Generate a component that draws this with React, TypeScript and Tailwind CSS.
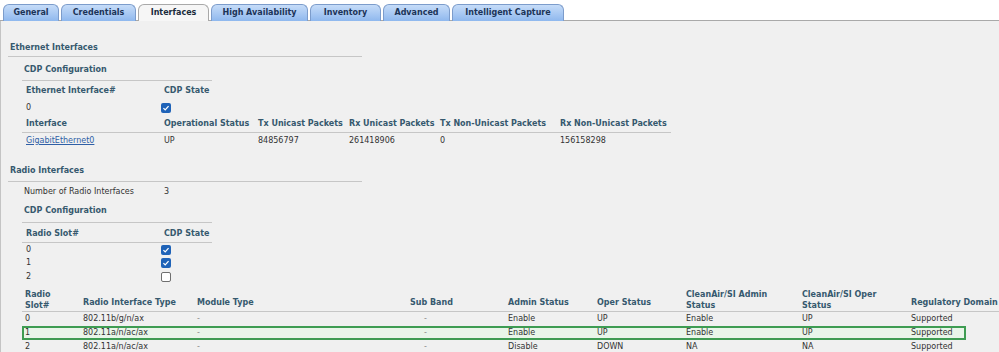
import React from 'react';

const tabs = [
  { label: 'General', w: 'w-[56px]' },
  { label: 'Credentials', w: 'w-[75px]' },
  { label: 'Interfaces', w: 'w-[71px]', active: true },
  { label: 'High Availability', w: 'w-[97px]' },
  { label: 'Inventory', w: 'w-[71px]' },
  { label: 'Advanced', w: 'w-[67px]' },
  { label: 'Intelligent Capture', w: 'w-[112px]' },
];

const head = 'font-bold text-[#36596e]';

const Checkbox: React.FC<{ checked?: boolean }> = ({ checked }) =>
  checked ? (
    <span className="flex h-[10px] w-[10px] items-center justify-center rounded-[2px] bg-[#1f63b8]">
      <svg viewBox="0 0 10 10" className="h-[8px] w-[8px]">
        <polyline points="1.8,5.2 4,7.3 8.2,2.6" fill="none" stroke="#fff" strokeWidth="1.6" />
      </svg>
    </span>
  ) : (
    <span className="block h-[10px] w-[10px] rounded-[2px] border border-[#6f6f6f] bg-white" />
  );

const ethCols = ['w-[139px] pl-[4px]', 'w-[94px] pl-[3px]', 'w-[91px] pl-[3px]', 'w-[91px] pl-[3px]', 'w-[120px] pl-[3px]', 'w-[114px] pl-[3px]'];
const radioCols = ['w-[58px] pl-[3px]', 'w-[114px] pl-[3px]', 'w-[213px] pl-[3px]', 'w-[98px] pl-[3px]', 'w-[89px] pl-[3px]', 'w-[89px] pl-[3px]', 'w-[116px] pl-[3px]', 'w-[109px] pl-[3px]', 'flex-1 pl-[3px]'];

const radioRows = [
  ['0', '802.11b/g/n/ax', '-', '-', 'Enable', 'UP', 'Enable', 'UP', 'Supported'],
  ['1', '802.11a/n/ac/ax', '-', '-', 'Enable', 'UP', 'Enable', 'UP', 'Supported'],
  ['2', '802.11a/n/ac/ax', '-', '-', 'Disable', 'DOWN', 'NA', 'NA', 'Supported'],
];

export default function App() {
  return (
    <div className="h-[352px] w-[999px] overflow-hidden bg-white font-['DejaVu_Sans',Verdana,sans-serif] text-[8px] leading-[10px] text-[#333]">
      {/* Tabs */}
      <div className="flex h-[21px] items-end gap-[2px] border-b border-[#a9a9a9] pl-[3px] pt-[4px]">
        {tabs.map((t) => (
          <div
            key={t.label}
            className={`${t.w} -mb-px flex h-[17px] items-center justify-center rounded-t-[6px] border border-b-0 font-bold ${
              t.active
                ? 'border-[#a9a9a9] bg-[#f6f6f6] text-[#1b2b3c]'
                : 'border-[#7c9ccb] bg-gradient-to-b from-[#c6dcf8] to-[#8fb8ee] text-[#1c3458]'
            }`}
          >
            {t.label}
          </div>
        ))}
      </div>

      {/* Content */}
      <div className="h-[331px] border-l border-[#c4c4c4] bg-[#f0f0f0] pl-[7px] pt-[19px]">
        <div className={`flex h-[17px] w-[354px] items-center border-b border-[#c6c6c6] pl-[2px] ${head}`}>Ethernet Interfaces</div>

        <div className="ml-[14px]">
          <div className={`flex h-[24px] w-[190px] items-center border-b border-[#c6c6c6] pl-[2px] pt-[3px] ${head}`}>CDP Configuration</div>
          <div className={`flex h-[20px] items-center ${head}`}>
            <div className={ethCols[0]}>Ethernet Interface#</div>
            <div className={ethCols[1]}>CDP State</div>
          </div>
          <div className="flex h-[13px] items-center">
            <div className={ethCols[0]}>0</div>
            <div className="w-[94px]">
              <Checkbox checked />
            </div>
          </div>
          <div className={`flex h-[19px] w-[649px] items-end border-b border-[#c6c6c6] pb-[3px] ${head}`}>
            <div className={ethCols[0]}>Interface</div>
            <div className={ethCols[1]}>Operational Status</div>
            <div className={ethCols[2]}>Tx Unicast Packets</div>
            <div className={ethCols[3]}>Rx Unicast Packets</div>
            <div className={ethCols[4]}>Tx Non-Unicast Packets</div>
            <div className={ethCols[5]}>Rx Non-Unicast Packets</div>
          </div>
          <div className="flex h-[15px] items-center">
            <div className={ethCols[0]}>
              <a href="#" className="text-[#2f5fa6] underline">GigabitEthernet0</a>
            </div>
            <div className={ethCols[1]}>UP</div>
            <div className={ethCols[2]}>84856797</div>
            <div className={ethCols[3]}>261418906</div>
            <div className={ethCols[4]}>0</div>
            <div className={ethCols[5]}>156158298</div>
          </div>
        </div>

        <div className={`flex h-[34px] w-[354px] items-end border-b border-[#c6c6c6] pb-[5px] pl-[2px] ${head}`}>Radio Interfaces</div>

        <div className="ml-[14px]">
          <div className="flex h-[19px] items-center">
            <div className="w-[139px] whitespace-nowrap pl-[2px]">Number of Radio Interfaces</div>
            <div className="pl-[3px]">3</div>
          </div>
          <div className={`flex h-[22px] w-[190px] items-end border-b border-[#c6c6c6] pb-[6px] pl-[2px] ${head}`}>CDP Configuration</div>
          <div className={`flex h-[20px] w-[190px] items-end border-b border-[#c6c6c6] pb-[3px] ${head}`}>
            <div className={ethCols[0]}>Radio Slot#</div>
            <div className="w-[51px] pl-[3px]">CDP State</div>
          </div>
          {[true, true, false].map((c, i) => (
            <div key={i} className={`flex items-center ${i === 1 ? 'h-[14px]' : 'h-[13px]'}`}>
              <div className={ethCols[0]}>{i}</div>
              <Checkbox checked={c} />
            </div>
          ))}

          <div className={`flex h-[29px] w-[977px] items-end border-b border-[#c6c6c6] ${head}`}>
            <div className={`${radioCols[0]} leading-[11px]`}>
              Radio
              <br />
              Slot#
            </div>
            <div className={`${radioCols[1]} pb-[3px]`}>Radio Interface Type</div>
            <div className={`${radioCols[2]} pb-[3px]`}>Module Type</div>
            <div className={`${radioCols[3]} pb-[3px]`}>Sub Band</div>
            <div className={`${radioCols[4]} pb-[3px]`}>Admin Status</div>
            <div className={`${radioCols[5]} pb-[3px]`}>Oper Status</div>
            <div className={`${radioCols[6]} leading-[11px]`}>
              CleanAir/SI Admin
              <br />
              Status
            </div>
            <div className={`${radioCols[7]} leading-[11px]`}>
              CleanAir/SI Oper
              <br />
              Status
            </div>
            <div className={`${radioCols[8]} pb-[3px]`}>Regulatory Domain</div>
          </div>
          {radioRows.map((r, i) => (
            <div
              key={i}
              className={`flex w-[944px] items-center ${
                i === 1 ? 'h-[14px] bg-[#e9f5e9] shadow-[inset_0_0_0_2px_#3e9c52]' : 'h-[14px]'
              }`}
            >
              {r.map((v, j) => (
                <div key={j} className={`${radioCols[j]} ${j === 3 ? 'pl-[17px]' : ''} ${j === 2 || j === 3 ? 'text-[#888]' : ''}`}>
                  {v}
                </div>
              ))}
            </div>
          ))}
        </div>
      </div>
    </div>
  );
}
